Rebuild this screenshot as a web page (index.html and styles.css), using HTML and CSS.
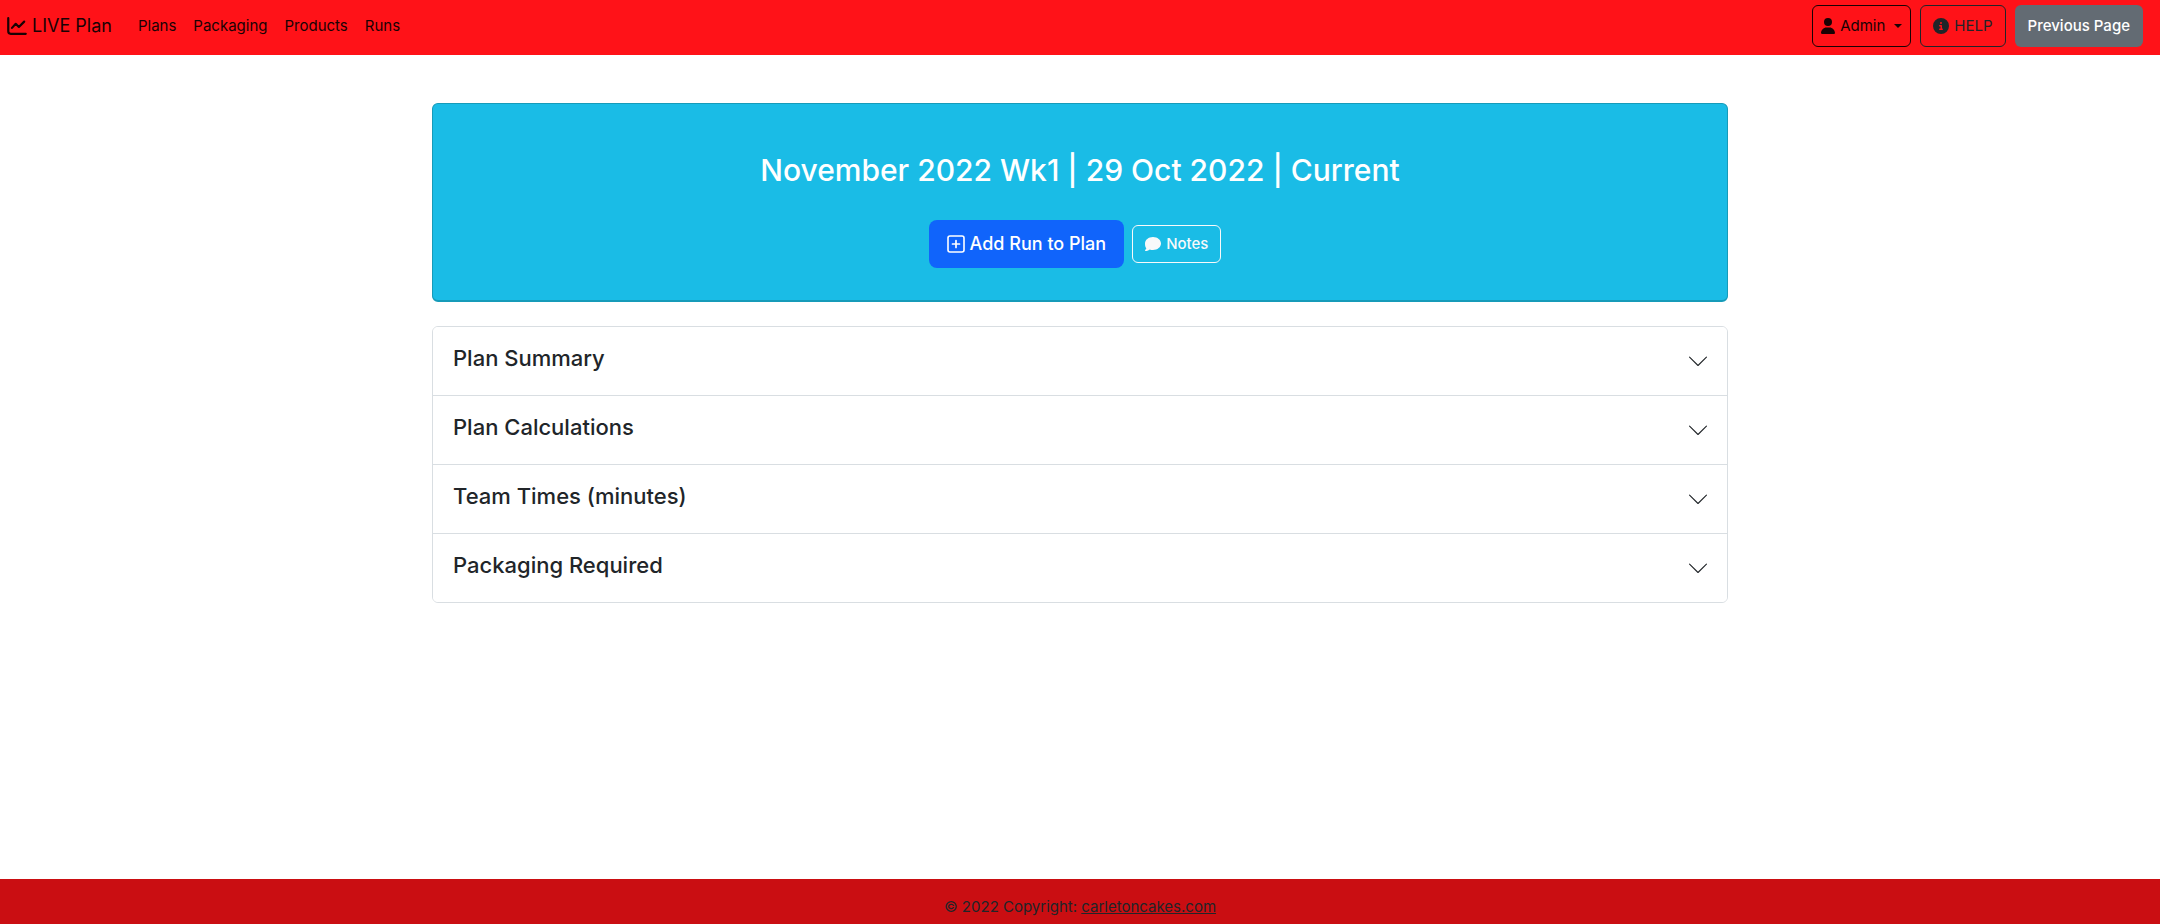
FILE: index.html
```html
<!DOCTYPE html>
<html lang="en">
<head>
<meta charset="utf-8">
<meta name="viewport" content="width=device-width, initial-scale=1">
<title>LIVE Plan</title>
<link rel="stylesheet" href="styles.css">
</head>
<body>
<nav class="navbar">
  <a class="brand" href="#"><svg class="icon" viewBox="0 0 512 512" aria-hidden="true"><path d="M32 56v336a64 64 0 0 0 64 64h384M128 304l96-104 80 80 136-136" fill="none" stroke="currentColor" stroke-width="56" stroke-linecap="round" stroke-linejoin="round"/></svg><span>LIVE Plan</span></a>
  <div class="nav-links">
    <a href="#">Plans</a>
    <a href="#">Packaging</a>
    <a href="#">Products</a>
    <a href="#">Runs</a>
  </div>
  <div class="nav-actions">
    <button class="btn btn-admin" type="button"><svg class="icon-user" viewBox="0 0 448 512" aria-hidden="true"><path fill="currentColor" d="M224 256a128 128 0 1 0 0-256 128 128 0 0 0 0 256zm-45.700 48C79.800 304 0 383.800 0 482.300 0 498.700 13.300 512 29.700 512h388.600c16.400 0 29.700-13.300 29.700-29.700C448 383.800 368.200 304 269.700 304z"/></svg><span>Admin</span><span class="caret"></span></button>
    <button class="btn btn-help" type="button"><svg class="icon-info" viewBox="0 0 512 512" aria-hidden="true"><path fill="currentColor" fill-rule="evenodd" d="M256 512a256 256 0 1 0 0-512 256 256 0 0 0 0 512zm-40-176h24v-64h-24a24 24 0 0 1 0-48h48c13.300 0 24 10.700 24 24v88h8a24 24 0 0 1 0 48h-80a24 24 0 0 1 0-48zm40-144a32 32 0 1 1 0-64 32 32 0 0 1 0 64z"/></svg><span>HELP</span></button>
    <button class="btn btn-previous" type="button">Previous Page</button>
  </div>
</nav>
<main class="container">
  <section class="banner">
    <h1>November 2022 Wk1 | 29 Oct 2022 | Current</h1>
    <div class="banner-actions">
      <button class="btn btn-add" type="button"><svg class="icon-plus" viewBox="0 0 18 18" aria-hidden="true"><rect x="1" y="1" width="16" height="16" rx="2" fill="none" stroke="currentColor" stroke-width="1.600"/><path d="M9 5.500v7M5.500 9h7" fill="none" stroke="currentColor" stroke-width="1.700" stroke-linecap="round"/></svg><span>Add Run to Plan</span></button>
      <button class="btn btn-notes" type="button"><svg class="icon-notes" viewBox="0 0 512 512" aria-hidden="true"><path fill="currentColor" d="M512 240c0 114.900-114.600 208-256 208-37.100 0-72.300-6.400-104.100-17.900-11.900 8.700-31.300 20.600-54.300 30.600C73.600 471.100 44.700 480 16 480c-6.500 0-12.300-3.900-14.800-9.900s-1.100-12.800 3.400-17.400c10-10.700 27.600-32.500 39-58.600C15.900 361 0 320.200 0 240 0 125.100 114.600 32 256 32s256 93.100 256 208z"/></svg><span>Notes</span></button>
    </div>
  </section>
  <section class="accordion">
    <button class="accordion-item" type="button" aria-expanded="false"><span class="accordion-title">Plan Summary</span><svg class="chevron" viewBox="0 0 16 16" aria-hidden="true"><path d="M.5 4.500 8 12l7.500-7.500" fill="none" stroke="currentColor" stroke-linecap="round" stroke-linejoin="round"/></svg></button>
    <button class="accordion-item" type="button" aria-expanded="false"><span class="accordion-title">Plan Calculations</span><svg class="chevron" viewBox="0 0 16 16" aria-hidden="true"><path d="M.5 4.500 8 12l7.500-7.500" fill="none" stroke="currentColor" stroke-linecap="round" stroke-linejoin="round"/></svg></button>
    <button class="accordion-item" type="button" aria-expanded="false"><span class="accordion-title">Team Times (minutes)</span><svg class="chevron" viewBox="0 0 16 16" aria-hidden="true"><path d="M.5 4.500 8 12l7.500-7.500" fill="none" stroke="currentColor" stroke-linecap="round" stroke-linejoin="round"/></svg></button>
    <button class="accordion-item" type="button" aria-expanded="false"><span class="accordion-title">Packaging Required</span><svg class="chevron" viewBox="0 0 16 16" aria-hidden="true"><path d="M.5 4.500 8 12l7.500-7.500" fill="none" stroke="currentColor" stroke-linecap="round" stroke-linejoin="round"/></svg></button>
  </section>
</main>
<footer class="footer">© 2022 Copyright: <a href="#">carletoncakes.com</a></footer>
</body>
</html>
```
FILE: styles.css
```css
* {
  box-sizing: border-box;
}

body {
  margin: 0;
  min-height: 100vh;
  display: flex;
  flex-direction: column;
  background: #fff;
  color: #212529;
  font: 400 15px/24px Inter, "Liberation Sans", sans-serif;
}

.navbar {
  display: flex;
  align-items: center;
  padding: 5px 17px 8px 7px;
  background: #ff1218;
}

.navbar a {
  color: #190204;
  text-decoration: none;
}

.navbar .brand {
  display: flex;
  align-items: center;
  gap: 5px;
  margin-right: 26px;
  font-size: 18px;
}

.icon {
  width: 20px;
  height: 20px;
}

.nav-links {
  display: flex;
  gap: 17px;
}

.nav-actions {
  display: flex;
  gap: 9px;
  margin-left: auto;
}

.btn {
  display: inline-flex;
  align-items: center;
  justify-content: center;
  border: 1px solid transparent;
  border-radius: 6px;
  background: transparent;
  font: inherit;
  white-space: nowrap;
  cursor: pointer;
}

.nav-actions .btn {
  min-height: 42px;
}

.btn-admin {
  gap: 5px;
  padding: 8px;
  border-color: #190204;
  color: #190204;
}

.icon-user {
  width: 14px;
  height: 16px;
}

.caret {
  margin-left: 4px;
  border-top: 4px solid;
  border-right: 4px solid transparent;
  border-left: 4px solid transparent;
}

.btn-help {
  gap: 5px;
  padding: 8px 12px;
  border-color: #212529;
  color: #212529;
}

.icon-info {
  width: 16px;
  height: 16px;
}

.btn-previous {
  padding: 8px 12px;
  background: #636b73;
  color: #fff;
  font-weight: 500;
}

.container {
  flex: 1;
  width: 100%;
  max-width: 1296px;
  margin: 0 auto;
  padding: 48px 0;
}

.banner {
  padding: 48px 24px 32px;
  border: 1px solid #169bb9;
  border-bottom-width: 2px;
  border-radius: 6px;
  background: #1abce6;
  text-align: center;
}

.banner h1 {
  margin: 0 0 32px;
  color: #fff;
  font-size: 30px;
  font-weight: 500;
  line-height: 36px;
}

.banner-actions {
  display: flex;
  align-items: center;
  justify-content: center;
  gap: 8px;
  padding-right: 10px;
}

.btn-add {
  gap: 5px;
  padding: 8px 17px;
  border-radius: 8px;
  background: #1064fb;
  color: #fff;
  font-size: 18px;
  font-weight: 500;
  line-height: 30px;
}

.icon-plus {
  width: 18px;
  height: 18px;
}

.btn-notes {
  gap: 5px;
  padding: 6px 12px;
  border-color: #f8f9fa;
  color: #f8f9fa;
  font-weight: 500;
}

.icon-notes {
  width: 16px;
  height: 16px;
}

.accordion {
  margin-top: 24px;
  border: 1px solid #d9dee2;
  border-radius: 6px;
  overflow: hidden;
}

.accordion-item {
  display: flex;
  align-items: center;
  justify-content: space-between;
  width: 100%;
  padding: 16px 20px;
  border: 0;
  background: #fff;
  color: #212529;
  font: inherit;
  text-align: left;
  cursor: pointer;
}

.accordion-item + .accordion-item {
  border-top: 1px solid #d9dee2;
}

.accordion-title {
  padding-bottom: 6px;
  font-size: 22px;
  font-weight: 500;
  line-height: 30px;
}

.chevron {
  width: 18px;
  height: 18px;
}

.footer {
  padding: 16px 16px 5px;
  background: #ca0e12;
  text-align: center;
}

.footer a {
  color: inherit;
}
```
